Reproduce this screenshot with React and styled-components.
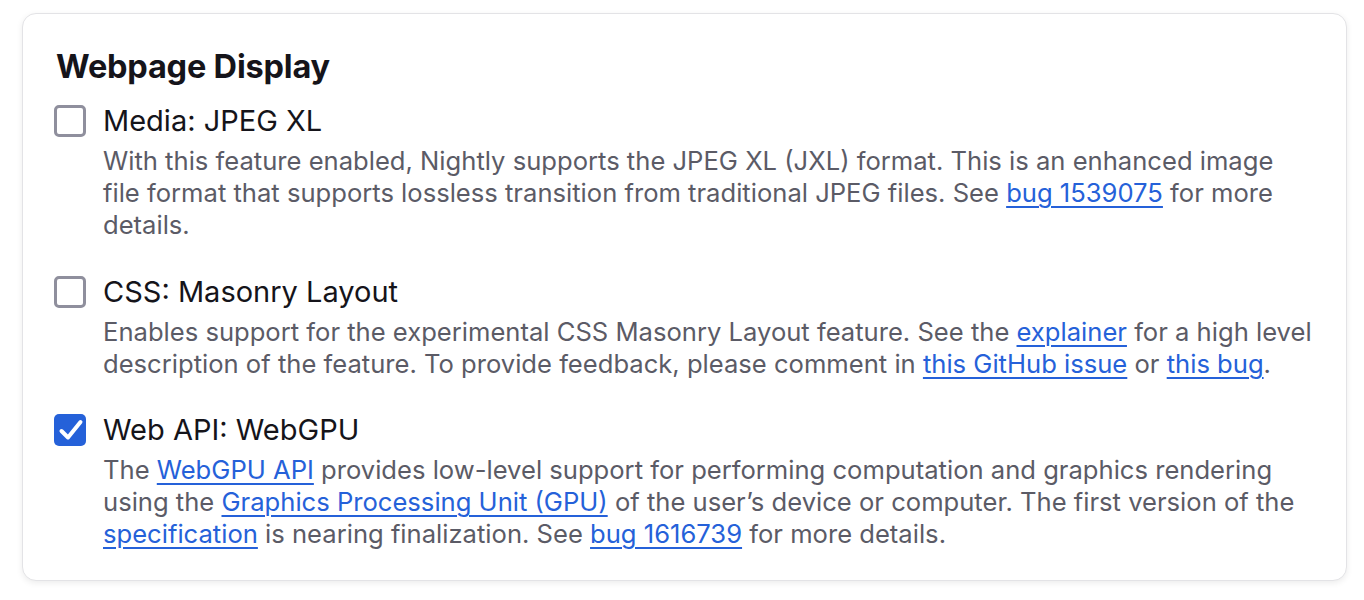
import styled, { createGlobalStyle } from 'styled-components';

const GlobalStyle = createGlobalStyle`
  body {
    margin: 0;
    background: #ffffff;
    font-family: Inter, "Noto Sans", sans-serif;
    color: #15141a;
  }
`;

const Page = styled.div`
  padding: 13px 17px 21px 22px;
`;

const Card = styled.section`
  background: #fff;
  border: 1px solid #e3e3e6;
  border-radius: 14px;
  box-shadow: 0 2px 6px rgba(0, 0, 0, 0.08);
  padding: 33px 30px 30px 31px;
`;

const Title = styled.h2`
  margin: 0 0 16px 2px;
  font-size: 32.5px;
  font-weight: 700;
  line-height: 40px;
  letter-spacing: -0.2px;
`;

const Feature = styled.div`
  display: grid;
  grid-template-columns: 32px 1fr;
  column-gap: 17px;
  margin-top: ${(p) => (p.first ? '0' : '32.5px')};
`;

const Box = styled.span`
  box-sizing: border-box;
  width: 32px;
  height: 32px;
  margin-top: 2px;
  border-radius: 5px;
  border: ${(p) => (p.checked ? 'none' : '3px solid #8f8f9d')};
  background: ${(p) => (p.checked ? '#2561d9' : '#fff')};
  display: flex;
  align-items: center;
  justify-content: center;
`;

const Label = styled.div`
  font-size: 29px;
  line-height: 36px;
  color: #15141a;
`;

const Description = styled.p`
  grid-column: 2;
  margin: 6px 0 0;
  font-size: 25.6px;
  line-height: 32px;
  color: #5b5b66;
`;

const Link = styled.a`
  color: #2561d9;
  text-decoration: underline;
  text-underline-offset: 4px;
  text-decoration-thickness: 2px;
`;

function Checkbox({ checked }) {
  return (
    <Box checked={checked}>
      {checked && (
        <svg width="32" height="32" viewBox="0 0 32 32" fill="none">
          <path d="M7.5 17l6.5 6.5L26.5 8" stroke="#fff" strokeWidth="4" strokeLinecap="round" strokeLinejoin="round" />
        </svg>
      )}
    </Box>
  );
}

export default function App() {
  return (
    <Page>
      <GlobalStyle />
      <Card>
        <Title>Webpage Display</Title>

        <Feature first>
          <Checkbox />
          <Label>Media: JPEG XL</Label>
          <Description>
            With this feature enabled, Nightly supports the JPEG XL (JXL) format. This is an enhanced image
            file format that supports lossless transition from traditional JPEG files. See{' '}
            <Link href="#">bug 1539075</Link> for more details.
          </Description>
        </Feature>

        <Feature>
          <Checkbox />
          <Label>CSS: Masonry Layout</Label>
          <Description>
            Enables support for the experimental CSS Masonry Layout feature. See the{' '}
            <Link href="#">explainer</Link> for a high level description of the feature. To provide
            feedback, please comment in <Link href="#">this GitHub issue</Link> or{' '}
            <Link href="#">this bug</Link>.
          </Description>
        </Feature>

        <Feature>
          <Checkbox checked />
          <Label>Web API: WebGPU</Label>
          <Description>
            The <Link href="#">WebGPU API</Link> provides low-level support for performing computation and
            graphics rendering using the <Link href="#">Graphics Processing Unit (GPU)</Link> of the
            user’s device or computer. The first version of the <Link href="#">specification</Link> is
            nearing finalization. See <Link href="#">bug 1616739</Link> for more details.
          </Description>
        </Feature>
      </Card>
    </Page>
  );
}
